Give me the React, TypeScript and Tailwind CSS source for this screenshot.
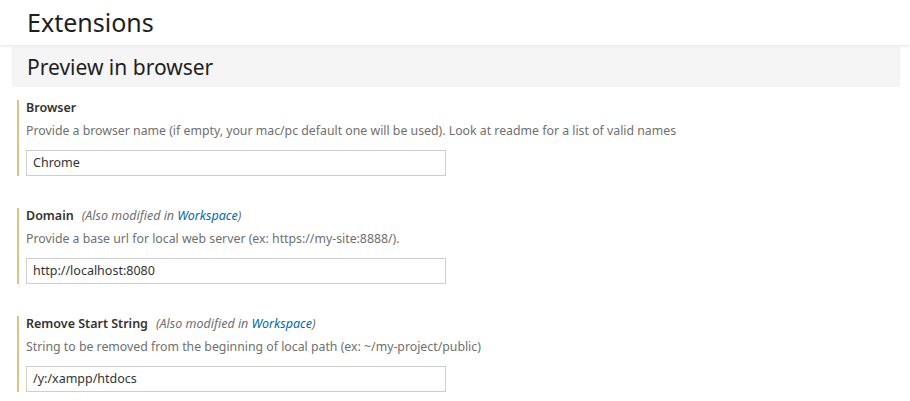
import React from "react";

type Setting = {
  title: string;
  modified?: boolean;
  description: string;
  value: string;
};

const settings: Setting[] = [
  {
    title: "Browser",
    description:
      "Provide a browser name (if empty, your mac/pc default one will be used). Look at readme for a list of valid names",
    value: "Chrome",
  },
  {
    title: "Domain",
    modified: true,
    description: "Provide a base url for local web server (ex: https://my-site:8888/).",
    value: "http://localhost:8080",
  },
  {
    title: "Remove Start String",
    modified: true,
    description: "String to be removed from the beginning of local path (ex: ~/my-project/public)",
    value: "/y:/xampp/htdocs",
  },
];

const SettingItem: React.FC<{ setting: Setting }> = ({ setting }) => (
  <div className="ml-[17px] border-l-2 border-[#e0c285] pl-[7px]">
    <div className="flex items-baseline text-[12.5px] leading-[16px]">
      <span className="font-semibold text-[#333333]">{setting.title}</span>
      {setting.modified && (
        <span className="ml-[8px] italic text-[#6f6f6f]">
          (Also modified in <span className="text-[#006ab1]">Workspace</span>)
        </span>
      )}
    </div>
    <div className="mt-[6px] text-[12.3px] leading-[18px] text-[#6f6f6f]">{setting.description}</div>
    <div className="mt-[10px] flex h-[26px] w-[420px] items-center border border-[#cecece] px-[6px] text-[12.5px] text-[#333333]">
      {setting.value}
    </div>
  </div>
);

const App: React.FC = () => {
  return (
    <div className="h-[401px] w-[910px] overflow-hidden bg-white font-['Noto_Sans',sans-serif]">
      <div className="relative z-10 h-[45px] bg-white pl-[27px] shadow-[0_1px_3px_rgba(0,0,0,0.12)]">
        <h1 className="text-[25px] leading-[44px] text-[#1e1e1e]">Extensions</h1>
      </div>
      <div className="ml-[12px] mr-[10px] mt-[2px] h-[40px] bg-[#f5f5f5] pl-[15px]">
        <h2 className="text-[21px] leading-[40px] text-[#1e1e1e]">Preview in browser</h2>
      </div>
      <div className="mt-[13px] flex flex-col gap-[32px]">
        {settings.map((s) => (
          <SettingItem key={s.title} setting={s} />
        ))}
      </div>
    </div>
  );
};

export default App;
